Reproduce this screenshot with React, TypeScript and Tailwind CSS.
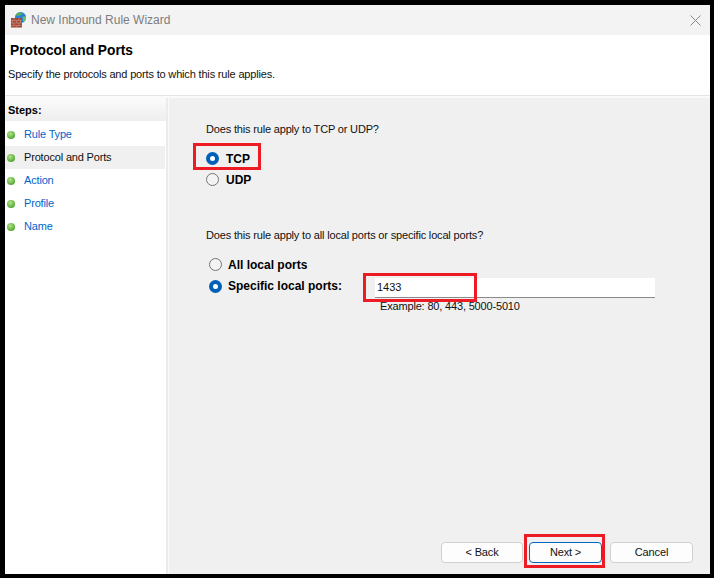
const FONT = "font-['Liberation_Sans','Roboto',sans-serif]";

const STEPS = [
  { label: 'Rule Type', active: false },
  { label: 'Protocol and Ports', active: true },
  { label: 'Action', active: false },
  { label: 'Profile', active: false },
  { label: 'Name', active: false },
];

function FirewallIcon() {
  return (
    <svg width="16" height="16" viewBox="0 0 16 16" className="shrink-0">
      <circle cx="9.500" cy="5.500" r="5.500" fill="#2b7fd6" />
      <path d="M5 2.500C6.500.8 9 .2 11 .6c.8 1.200-.4 2.400-2 2.800S5.500 4.500 5 2.500z" fill="#57b84a" />
      <path d="M11.500 5c1.300-.6 2.800-.6 3.500 0 .2 2-.8 3.900-2.500 4.800L11.500 5z" fill="#6cc35a" />
      <rect x="0" y="6" width="11" height="9.500" fill="#a04a38" />
      <path d="M0 8.500h11M0 11h11M0 13.500h11M3 6v2.500M8 6v2.500M5.500 8.500V11M1.500 8.500V11M9.500 8.500V11M3 11v2.500M8 11v2.500M5.500 13.500v2" stroke="#c98a75" strokeWidth="0.7" fill="none" />
    </svg>
  );
}

function StepDot() {
  return <span className="h-[8px] w-[8px] shrink-0 rounded-full bg-[radial-gradient(circle_at_40%_35%,#b4e58c,#4fa52e_75%)]" />;
}

function Radio({ checked }: { checked: boolean }) {
  return checked ? (
    <span className="flex h-[13px] w-[13px] shrink-0 items-center justify-center rounded-full bg-[#0060b8]">
      <span className="h-[5px] w-[5px] rounded-full bg-white" />
    </span>
  ) : (
    <span className="h-[13px] w-[13px] shrink-0 rounded-full border border-[#767676] bg-[#f3f3f3]" />
  );
}

function WizardButton({ label, primary, width }: { label: string; primary?: boolean; width: string }) {
  return (
    <button
      className={`h-[21px] rounded-[4px] border bg-[#fdfdfd] text-[11px] tracking-[-0.15px] text-[#111] ${width} ${
        primary ? 'border-[#0067c0]' : 'border-[#d0d0d0]'
      }`}
    >
      {label}
    </button>
  );
}

export default function App() {
  return (
    <div className={`${FONT} relative flex h-[578px] w-[714px] flex-col bg-black pb-[4px] pl-[5px] pr-[4px] pt-[5px] text-[11px] tracking-[-0.17px] text-[#111]`}>
      {/* title bar */}
      <div className="flex h-[30px] shrink-0 items-center bg-[#f3f3f3] pl-[6px] pr-[9px]">
        <FirewallIcon />
        <span className="ml-[4px] text-[12px] tracking-normal text-[#7d7d7d]">New Inbound Rule Wizard</span>
        <svg width="11" height="11" viewBox="0 0 11 11" className="ml-auto">
          <path d="M.5.5l10 10M10.5.5l-10 10" stroke="#8a8a8a" strokeWidth="1" fill="none" />
        </svg>
      </div>

      {/* header */}
      <div className="h-[60px] shrink-0 bg-white pl-[5px] pt-[7px]">
        <div className="text-[13.750px] font-bold leading-[18px] tracking-normal text-black">Protocol and Ports</div>
        <div className="ml-[-2px] mt-[6px] leading-[16px]">Specify the protocols and ports to which this rule applies.</div>
      </div>
      <div className="h-[3px] shrink-0 border-t border-[#e4e4e4] bg-[#fafafa]" />

      <div className="flex min-h-0 flex-1 bg-[#f0f0f0]">
        {/* steps */}
        <div className="w-[161px] shrink-0 bg-white">
          <div className="h-[23px] bg-gradient-to-b from-[#fbfbfb] to-[#eeeeee] pl-[3px] text-[11px] font-bold leading-[25px] tracking-normal text-black">Steps:</div>
          <div className="mt-[2px] flex flex-col">
            {STEPS.map((s) => (
              <div
                key={s.label}
                className={`flex h-[23px] items-center gap-[9px] pl-[2px] ${s.active ? 'mr-[1px] bg-[#f0f0f0] text-[#111]' : 'text-[#0066cc]'}`}
              >
                <StepDot />
                <span>{s.label}</span>
              </div>
            ))}
          </div>
        </div>
        <div className="w-[3px] shrink-0 border-r border-[#fafafa] bg-[#ebebeb]" />

        {/* content */}
        <div className="flex min-w-0 flex-1 flex-col bg-[#f0f0f0] pl-[37px] pr-[17px] pt-[23px]">
          <div className="leading-[16px]">Does this rule apply to TCP or UDP?</div>
          <div className="mt-[11px] flex h-[21px] items-center gap-[7px] text-[12px] font-bold tracking-normal text-black">
            <Radio checked />
            <span>TCP</span>
          </div>
          <div className="flex h-[21px] items-center gap-[7px] text-[12px] font-bold tracking-normal text-black">
            <Radio checked={false} />
            <span>UDP</span>
          </div>
          <div className="mt-[37px] leading-[16px]">Does this rule apply to all local ports or specific local ports?</div>
          <div className="ml-[3px] mt-[11px] flex h-[21px] items-center gap-[6px] text-[12px] font-bold tracking-normal text-black">
            <Radio checked={false} />
            <span>All local ports</span>
          </div>
          <div className="ml-[3px] flex h-[22px] items-center text-[12px] font-bold tracking-normal text-black">
            <Radio checked />
            <span className="ml-[6px] w-[147px]">Specific local ports:</span>
            <div className="mt-[3px] h-[20px] w-[280px] self-start border-b border-[#8a8a8a] bg-white pl-[2px] text-[11px] font-normal leading-[19px] text-[#111]">1433</div>
          </div>
          <div className="ml-[174px] mt-[1px] leading-[16px]">Example: 80, 443, 5000-5010</div>

          <div className="mb-[11px] mt-auto flex items-center justify-end">
            <WizardButton label="< Back" width="w-[82px]" />
            <div className="w-[6px]" />
            <WizardButton label="Next >" primary width="w-[73px]" />
            <div className="w-[8px]" />
            <WizardButton label="Cancel" width="w-[83px]" />
          </div>
        </div>
      </div>

      {/* red annotation boxes */}
      <div className="absolute left-[193px] top-[143px] h-[27px] w-[68px] border-[3px] border-[#ed1c24]" />
      <div className="absolute left-[363px] top-[273px] h-[29px] w-[114px] border-[3px] border-[#ed1c24]" />
      <div className="absolute left-[524px] top-[534px] h-[34px] w-[81px] border-[3px] border-[#ed1c24]" />
    </div>
  );
}
